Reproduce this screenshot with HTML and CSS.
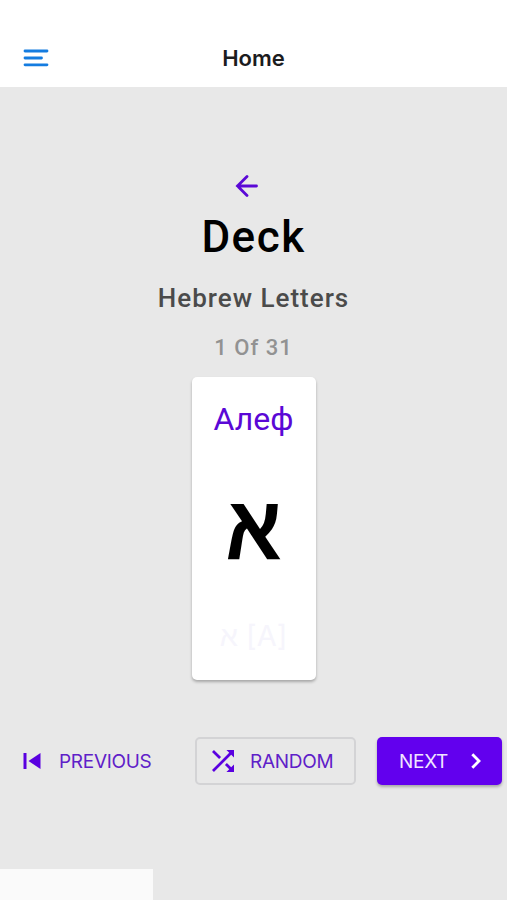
FILE: index.html
```html
<!DOCTYPE html>
<html lang="en">

<head>
  <meta charset="UTF-8">
  <title>Home</title>
  <link rel="stylesheet" href="styles.css">
</head>

<body>
  <header class="header">
    <svg class="menu-icon" viewBox="0 0 26 18">
      <path d="M2 2H24M2 9H18.5M2 15.8H24" />
    </svg>
    <h1 class="header-title">Home</h1>
  </header>

  <main class="main">
    <svg class="back-icon" viewBox="0 0 24 22">
      <path d="M21.5 11H2.5M12 1.5L2.5 11L12 20.5" />
    </svg>
    <h2 class="title">Deck</h2>
    <h3 class="deck-name">Hebrew Letters</h3>
    <p class="counter">1 Of 31</p>

    <div class="card">
      <div class="card-name">Алеф</div>
      <div class="card-letter">א</div>
      <div class="card-hint" dir="ltr"><span class="hint-letter">א</span> [A]</div>
    </div>

    <div class="buttons">
      <button class="btn btn-text">
        <svg class="prev-icon" viewBox="0 0 18 18">
          <path d="M0.5 1H3.5V17H0.5ZM17.5 1V17L5.5 9Z" />
        </svg>
        <span>PREVIOUS</span>
      </button>
      <button class="btn btn-outlined">
        <svg class="random-icon" viewBox="4 4 16 16">
          <path d="M10.59 9.17L5.41 4L4 5.41L9.17 10.58ZM14.5 4L16.54 6.04L4 18.59L5.41 20L17.96 7.46L20 9.5V4ZM14.83 13.41L13.42 14.82L16.55 17.95L14.5 20H20V14.5L17.96 16.54Z" />
        </svg>
        <span>RANDOM</span>
      </button>
      <button class="btn btn-contained">
        <span>NEXT</span>
        <svg class="next-icon" viewBox="0 0 10 16">
          <path d="M1.3 1.3L8 8L1.3 14.7" />
        </svg>
      </button>
    </div>
  </main>

  <footer class="footer"></footer>
</body>

</html>
```

FILE: styles.css
```css
body {
  margin: 0;
  height: 900px;
  display: flex;
  flex-direction: column;
  overflow: hidden;
  background: #e8e8e8;
  font-family: Roboto, sans-serif;
}

.header {
  box-sizing: border-box;
  height: 87px;
  padding: 28px 23px 0;
  display: grid;
  grid-template-columns: 26px 1fr 26px;
  align-items: center;
  background: #fff;
}

.menu-icon {
  width: 26px;
  height: 18px;
  fill: none;
  stroke: #147ce0;
  stroke-width: 2.8;
  stroke-linecap: round;
}

.header-title {
  margin: 0;
  text-align: center;
  font: 600 22px/28px Inter, sans-serif;
  color: #1c1c1e;
}

.main {
  flex: 1;
  display: flex;
  flex-direction: column;
  align-items: center;
}

.back-icon {
  width: 24px;
  height: 22px;
  margin: 88px 14px 0 0;
  fill: none;
  stroke: #5a08d6;
  stroke-width: 2.8;
  stroke-linecap: round;
}

.title {
  margin: 14px 0 0;
  font-size: 44px;
  font-weight: 500;
  line-height: 52px;
  letter-spacing: 1.5px;
  color: #000;
}

.deck-name {
  margin: 17px 0 0;
  font-size: 26px;
  font-weight: 500;
  line-height: 36px;
  letter-spacing: 1px;
  color: #4b4b4b;
}

.counter {
  margin: 17px 0 0;
  font-size: 22px;
  font-weight: 500;
  line-height: 30px;
  letter-spacing: 1px;
  color: #929292;
}

.card {
  box-sizing: border-box;
  width: 124px;
  height: 303px;
  margin-top: 14px;
  padding-top: 23px;
  display: flex;
  flex-direction: column;
  align-items: center;
  border-radius: 5px;
  background: #fff;
  box-shadow: 0 2px 3px rgba(0, 0, 0, 0.28);
}

.card-name {
  font-size: 32px;
  line-height: 38px;
  color: #5a08d6;
}

.card-letter {
  margin-top: 38px;
  font: 700 83px/110px "Liberation Sans", sans-serif;
  color: #000;
  transform: scaleY(1.1);
  transform-origin: 50% 84px;
}

.card-hint {
  margin-top: 30px;
  font: 29px/40px Inter, sans-serif;
  color: #f6f5fc;
}

.hint-letter {
  font-family: "Liberation Sans", sans-serif;
}

.buttons {
  align-self: stretch;
  margin-top: 57px;
  padding: 0 5px 0 1px;
  display: flex;
  justify-content: space-between;
}

.btn {
  box-sizing: border-box;
  height: 48px;
  padding: 0;
  display: flex;
  align-items: center;
  border: none;
  border-radius: 5px;
  background: none;
  font: 400 19px/24px Inter, sans-serif;
  letter-spacing: -0.3px;
  color: #5f20c8;
}

.btn span {
  padding-top: 2px;
}

.btn svg {
  fill: #5a00e0;
}

.btn-text {
  width: 173px;
  padding-left: 22px;
  gap: 18px;
}

.btn-outlined {
  width: 161px;
  padding-left: 15px;
  gap: 16px;
  border: 2px solid #d3d3d5;
}

.btn-contained {
  width: 125px;
  padding-left: 22px;
  gap: 23px;
  background: #6200ee;
  color: #f0e5ff;
  box-shadow: 0 2px 3px rgba(0, 0, 0, 0.28);
}

.prev-icon {
  width: 18px;
  height: 18px;
}

.random-icon {
  width: 22px;
  height: 22px;
}

.btn .next-icon {
  width: 10px;
  height: 16px;
  fill: none;
  stroke: #fff;
  stroke-width: 2.8;
}

.footer {
  width: 153px;
  height: 31px;
  background: #fafafa;
}
```
